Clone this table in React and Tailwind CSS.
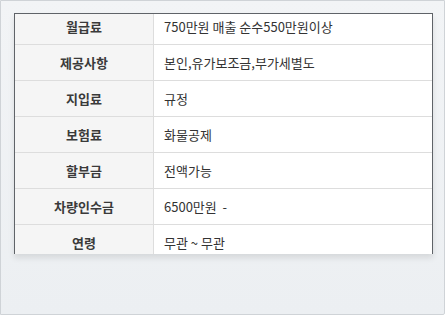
const rows = [
  ["월급료", "750만원 매출 순수550만원이상"],
  ["제공사항", "본인,유가보조금,부가세별도"],
  ["지입료", "규정"],
  ["보험료", "화물공제"],
  ["할부금", "전액가능"],
  ["차량인수금", "6500만원  -"],
  ["연령", "무관 ~ 무관"],
];

export default function App() {
  return (
    <div className="w-[445px] h-[317px] bg-white font-['Noto_Sans_CJK_KR',sans-serif]">
      {/* window frame */}
      <div className="h-[315px] border border-[#cfd3d7] rounded-br-[2px] bg-gradient-to-b from-[#f2f4f6] to-[#eceff2] pt-[12px] pl-[13px] pr-[11px]">
        {/* scrolling detail box */}
        <div className="h-[241px] border-t border-x border-[#5f6368] overflow-hidden bg-white shadow-[0_4px_6px_rgba(0,0,0,0.1)]">
          <div className="-mt-[5px]">
            {rows.map(([label, value]) => (
              <div key={label} className="flex h-[36px] border-b border-[#dddddd]">
                <div className="w-[139px] shrink-0 flex items-center justify-center bg-[#f5f5f5] border-r border-[#dddddd] text-[13px] font-bold text-[#3a3a3a]">
                  {label}
                </div>
                <div className="flex-1 flex items-center pl-[10px] text-[13px] text-[#333333] whitespace-pre">
                  {value}
                </div>
              </div>
            ))}
          </div>
        </div>
      </div>
    </div>
  );
}
